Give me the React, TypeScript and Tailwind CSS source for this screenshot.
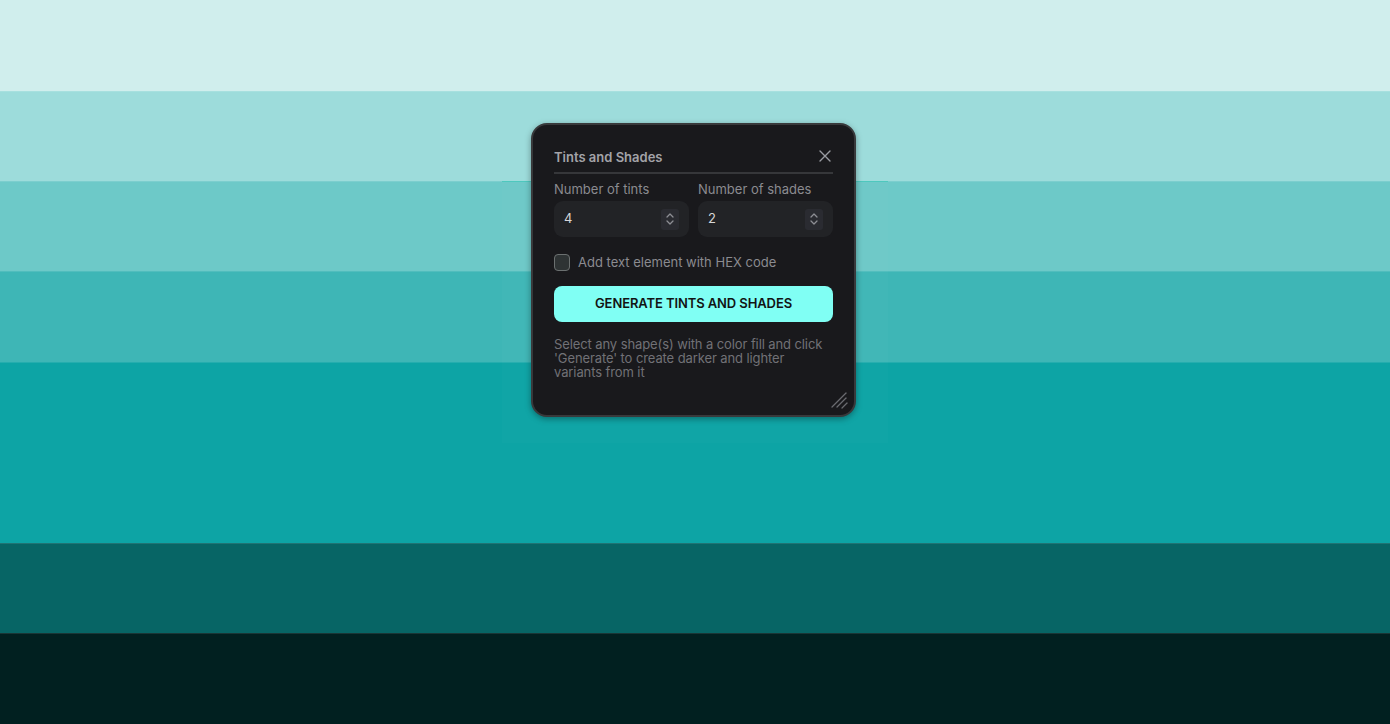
import React from "react";

const stripes = [
  { color: "bg-[#d0eeed]", h: "h-[91px]" },
  { color: "bg-[#9ddcdb]", h: "h-[90px]" },
  { color: "bg-[#6dc9c8]", h: "h-[90px]" },
  { color: "bg-[#3eb6b6]", h: "h-[91px]" },
  { color: "bg-[#0da4a5]", h: "h-[181px]" },
  { color: "bg-[#076565]", h: "h-[90px]" },
  { color: "bg-[#012020]", h: "h-[91px]" },
];

const Chevrons = () => (
  <svg width="10" height="16" viewBox="0 0 10 16" fill="none" stroke="#8d8e94" strokeWidth="1.3" strokeLinecap="round" strokeLinejoin="round">
    <path d="M2 6 L5 3 L8 6" />
    <path d="M2 10 L5 13 L8 10" />
  </svg>
);

const NumberField = ({ label, value }: { label: string; value: string }) => (
  <div className="flex flex-col">
    <span className="text-[13px] leading-4 text-[#8b8b90] mb-[4px]">{label}</span>
    <div className="h-[36px] rounded-[9px] bg-[#222326] flex items-center justify-between pl-[10px] pr-[10px]">
      <span className="text-[13px] text-[#d6d6d8]">{value}</span>
      <div className="w-[18px] h-[21px] rounded-[3px] bg-[#2a2b31] flex items-center justify-center">
        <Chevrons />
      </div>
    </div>
  </div>
);

export default function App() {
  return (
    <div className="relative w-[1390px] h-[724px] overflow-hidden font-['Inter','Liberation_Sans',sans-serif]">
      <div className="flex flex-col">
        {stripes.map((s, i) => (
          <div key={i} className={`${s.color} ${s.h} ${i > 0 ? "border-t border-white/10" : ""}`} />
        ))}
      </div>

      {/* faint frame behind the panel */}
      <div className="absolute left-[502px] top-[181px] w-[386px] h-[262px] bg-white/[0.015] border-t border-[#2ec4b4]/60" />

      <div className="absolute left-[531px] top-[123px] w-[325px] h-[294px] rounded-[16px] bg-[#19191c] border-2 border-[#38393b] shadow-[0_2px_6px_rgba(0,0,0,0.35)] px-[21px] pt-[23px]">
        <div className="flex items-center justify-between h-[20px]">
          <span className="text-[13px] font-semibold text-[#a3a3a8]">Tints and Shades</span>
          <svg width="14" height="14" viewBox="0 0 14 14" stroke="#9a9ca2" strokeWidth="1.4" strokeLinecap="round" className="mr-[1px] -mt-[4px]">
            <path d="M2 2 L12 12 M12 2 L2 12" />
          </svg>
        </div>
        <div className="h-[2px] bg-[#36373a] mt-[4px]" />

        <div className="grid grid-cols-2 gap-[9px] mt-[7px]">
          <NumberField label="Number of tints" value="4" />
          <NumberField label="Number of shades" value="2" />
        </div>

        <div className="flex items-center gap-[8px] mt-[16px]">
          <div className="w-[16px] h-[17px] rounded-[4px] border border-[#6b7070] bg-[#2e3334]" />
          <span className="text-[13px] text-[#8b8b90]">Add text element with HEX code</span>
        </div>

        <button className="mt-[13px] w-full h-[36px] rounded-[8px] bg-[#80fff4] text-[13px] font-semibold text-[#121414] tracking-[-0.1px]">
          GENERATE TINTS AND SHADES
        </button>

        <p className="mt-[15px] text-[13px] leading-[14px] text-[#717176] w-[280px] tracking-[-0.1px]">
          Select any shape(s) with a color fill and click 'Generate' to create darker and lighter variants from it
        </p>

        <svg width="20" height="20" viewBox="0 0 20 20" stroke="#6a6b70" strokeWidth="1.3" strokeLinecap="round" className="absolute right-[4px] bottom-[4px]">
          <path d="M2 16 L16 2" />
          <path d="M7 16 L16 7" />
          <path d="M12 17 L17 12" />
        </svg>
      </div>
    </div>
  );
}
